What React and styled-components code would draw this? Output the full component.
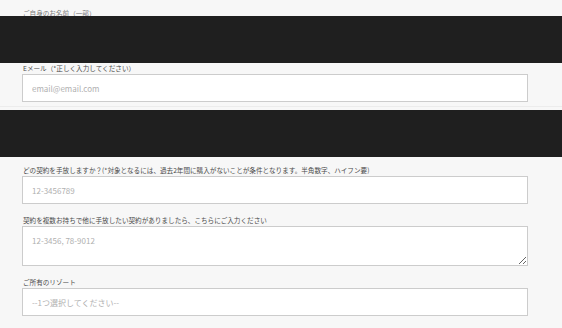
import React from 'react';
import styled, { createGlobalStyle, css } from 'styled-components';

const GlobalStyle = createGlobalStyle`
    html, body {
        margin: 0;
        padding: 0;
        background: #f7f7f7;
    }
    body {
        font-family: "Noto Sans CJK JP", "Noto Sans", sans-serif;
        color: #444;
    }
`;

const App = () => {
    return (
        <Page>
            <GlobalStyle />
            <Clip>
                <Label top>ご自身のお名前（一部）</Label>
            </Clip>
            <DarkBar />
            <Section>
                <Field>
                    <Label>Eメール（*正しく入力してください）</Label>
                    <Input type="email" placeholder="email@email.com" />
                </Field>
            </Section>
            <Divider />
            <DarkBar />
            <Section padded>
                <Field>
                    <Label>どの契約を手放しますか？(*対象となるには、過去2年間に購入がないことが条件となります。半角数字、ハイフン要)</Label>
                    <Input type="text" placeholder="12-3456789" />
                </Field>
                <Field>
                    <Label>契約を複数お持ちで他に手放したい契約がありましたら、こちらにご入力ください</Label>
                    <TextArea placeholder="12-3456, 78-9012" />
                </Field>
                <Field>
                    <Label>ご所有のリゾート</Label>
                    <Select defaultValue="">
                        <option value="">--1つ選択してください--</option>
                    </Select>
                </Field>
            </Section>
        </Page>
    );
};

const Page = styled.div`
    width: 562px;
    height: 328px;
    overflow: hidden;
    background: #f7f7f7;
`;

const Clip = styled.div`
    height: 16px;
    overflow: hidden;
    padding: 0 22px;
`;

const DarkBar = styled.div`
    height: 47px;
    background: #1f1f1f;
`;

const Divider = styled.div`
    height: 1px;
    margin-top: 4px;
    margin-bottom: 3px;
    background: #ececec;
`;

const Section = styled.div`
    display: flex;
    flex-direction: column;
    gap: 11px;
    padding: 0 34px 0 22px;

    ${props =>
        props.padded && css`
            padding-top: 8px;
        `}
`;

const Field = styled.div`
    display: flex;
    flex-direction: column;
    gap: 1px;
`;

const Label = styled.label`
    display: block;
    padding-left: 1px;
    font-size: 6.6px;
    line-height: 10px;
    color: #4a4a4a;
    white-space: nowrap;

    ${props =>
        props.top && css`
            margin-top: 8px;
            color: #777;
        `}
`;

const inputBase = css`
    box-sizing: border-box;
    width: 506px;
    margin: 0;
    border: 1px solid #cccccc;
    border-radius: 0;
    background: #ffffff;
    padding: 0 9px;
    font-family: "Noto Sans CJK JP", "Noto Sans", sans-serif;
    font-size: 8px;
    color: #555;
    outline: none;

    &::placeholder {
        color: #b0b0b0;
    }
`;

const Input = styled.input`
    ${inputBase}
    height: 28px;
`;

const TextArea = styled.textarea`
    ${inputBase}
    height: 40px;
    padding-top: 8px;
    line-height: 12px;
    resize: vertical;
    display: block;
`;

const Select = styled.select`
    ${inputBase}
    height: 28px;
    appearance: none;
    -webkit-appearance: none;
    color: #b0b0b0;
`;

export default App;
